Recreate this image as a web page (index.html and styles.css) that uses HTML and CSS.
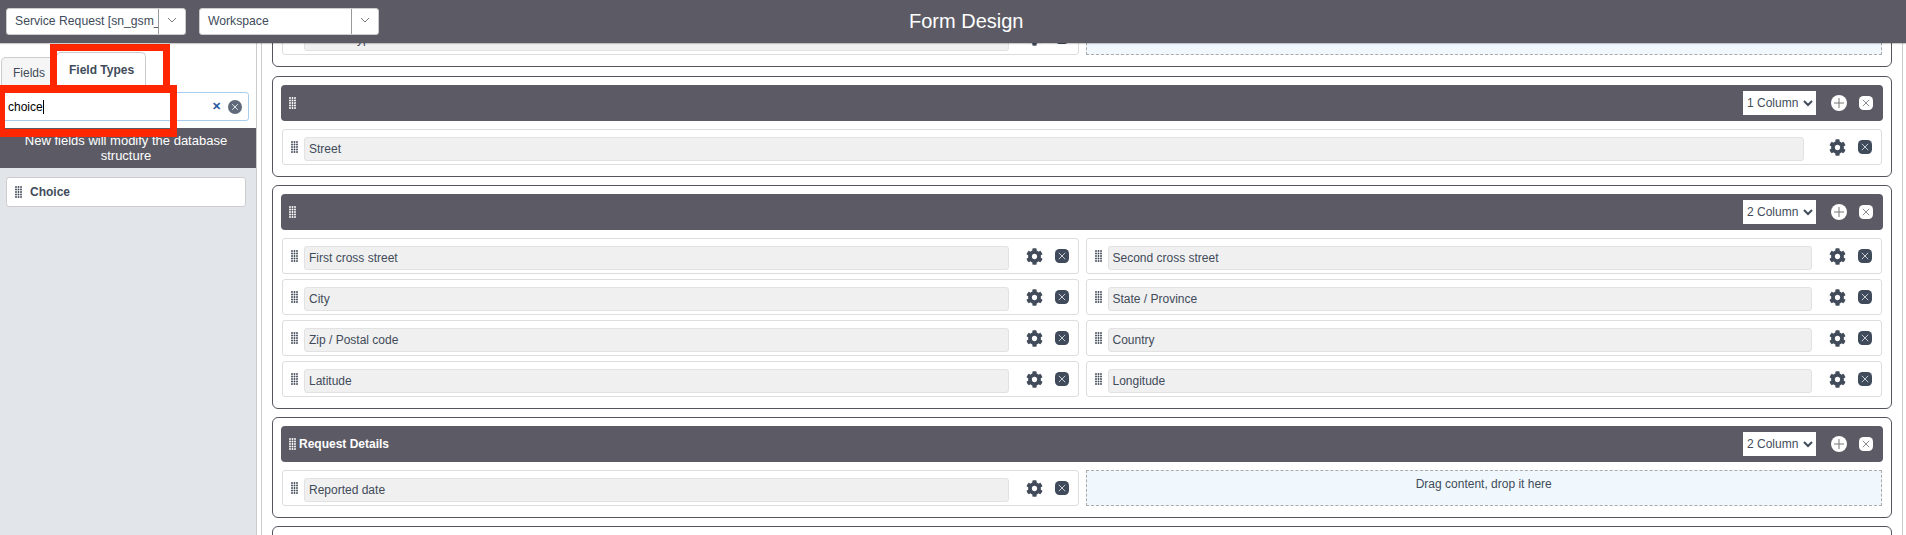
FILE: index.html
```html
<!DOCTYPE html>
<html lang="en">
  <head>
    <meta charset="UTF-8" />
    <title>Form Design</title>
    <link rel="stylesheet" href="styles.css">
  </head>
  <body>
    <svg class="defs" width="0" height="0">
      <symbol id="grip" viewBox="0 0 7 12">
        <g fill="currentColor">
          <circle cx="1" cy="1" r="0.95"/><circle cx="3.500" cy="1" r="0.95"/><circle cx="6" cy="1" r="0.95"/>
          <circle cx="1" cy="3.500" r="0.95"/><circle cx="3.500" cy="3.500" r="0.95"/><circle cx="6" cy="3.500" r="0.95"/>
          <circle cx="1" cy="6" r="0.95"/><circle cx="3.500" cy="6" r="0.95"/><circle cx="6" cy="6" r="0.95"/>
          <circle cx="1" cy="8.500" r="0.95"/><circle cx="3.500" cy="8.500" r="0.95"/><circle cx="6" cy="8.500" r="0.95"/>
          <circle cx="1" cy="11" r="0.95"/><circle cx="3.500" cy="11" r="0.95"/><circle cx="6" cy="11" r="0.95"/>
        </g>
      </symbol>
      <symbol id="gear" viewBox="0 0 512 512">
        <path fill="currentColor" d="M487.4 315.7l-42.6-24.6c4.3-23.2 4.3-47 0-70.2l42.6-24.6c4.9-2.8 7.1-8.6 5.5-14-11.1-35.6-30-67.8-54.7-94.6-3.8-4.1-10-5.1-14.8-2.3L380.8 110c-17.9-15.4-38.5-27.3-60.8-35.1V25.8c0-5.6-3.9-10.5-9.4-11.7-36.7-8.2-74.3-7.8-109.2 0-5.5 1.2-9.4 6.1-9.4 11.7V75c-22.2 7.9-42.8 19.8-60.8 35.1L88.7 85.5c-4.9-2.8-11-1.9-14.8 2.3-24.7 26.7-43.6 58.9-54.7 94.6-1.7 5.4.6 11.2 5.5 14L67.3 221c-4.3 23.2-4.3 47 0 70.2l-42.6 24.6c-4.9 2.8-7.1 8.6-5.5 14 11.1 35.6 30 67.8 54.7 94.6 3.8 4.1 10 5.1 14.8 2.3l42.6-24.6c17.9 15.4 38.5 27.3 60.8 35.1v49.2c0 5.6 3.9 10.5 9.4 11.7 36.7 8.2 74.3 7.8 109.2 0 5.5-1.2 9.4-6.1 9.4-11.7v-49.2c22.2-7.9 42.8-19.8 60.8-35.1l42.6 24.6c4.9 2.8 11 1.9 14.8-2.3 24.7-26.7 43.6-58.9 54.7-94.6 1.5-5.5-.7-11.3-5.6-14.1zM256 336c-44.1 0-80-35.9-80-80s35.9-80 80-80 80 35.9 80 80-35.9 80-80 80z"/>
      </symbol>
      <symbol id="close-box" viewBox="0 0 14 14">
        <rect width="14" height="14" rx="4.500" fill="#3f4a5a"/>
        <path d="M3.800 3.800l6.400 6.400M10.200 3.800l-6.400 6.400" stroke="#c9ced6" stroke-width="1" fill="none"/>
      </symbol>
      <symbol id="close-box-light" viewBox="0 0 14 14">
        <rect width="14" height="14" rx="4.500" fill="#fff"/>
        <path d="M3.800 3.800l6.400 6.400M10.200 3.800l-6.400 6.400" stroke="#8a8a92" stroke-width="1" fill="none"/>
      </symbol>
      <symbol id="plus-circle" viewBox="0 0 16 16">
        <circle cx="8" cy="8" r="8" fill="#fff"/>
        <path d="M8 3v10M3 8h10" stroke="#777" stroke-width="1" fill="none"/>
      </symbol>
      <symbol id="chevron" viewBox="0 0 10 6">
        <path d="M1 1l4 4 4-4" stroke="#777" stroke-width="1" fill="none"/>
      </symbol>
    </svg>

    <header class="topbar">
      <div class="picker">
        <span class="picker-text">Service Request [sn_gsm_</span>
        <span class="picker-arrow"><svg width="10" height="6"><use href="#chevron"/></svg></span>
      </div>
      <div class="picker">
        <span class="picker-text">Workspace</span>
        <span class="picker-arrow"><svg width="10" height="6"><use href="#chevron"/></svg></span>
      </div>
      <h1 class="title">Form Design</h1>
    </header>

    <div class="layout">
      <aside class="sidebar">
        <div class="tabs">
          <div class="tab">Fields</div>
          <div class="tab tab-active">Field Types</div>
        </div>
        <div class="search">
          <span class="search-text"><span class="caret">choice</span></span>
          <span class="search-clear">&#10005;</span>
          <svg class="search-reset" width="14" height="14" viewBox="0 0 14 14">
            <circle cx="7" cy="7" r="7" fill="#5f6b7a"/>
            <path d="M4.2 4.2l5.6 5.6M9.800 4.200l-5.600 5.600" stroke="#e4e7ea" stroke-width="1" fill="none"/>
          </svg>
        </div>
        <div class="notice">New fields will modify the database structure</div>
        <div class="type-list">
          <div class="type-item">
            <svg class="grip" width="7" height="12"><use href="#grip"/></svg>
            <span>Choice</span>
          </div>
        </div>
        <div class="callout callout-tab"></div>
        <div class="callout callout-search"></div>
      </aside>

      <main class="canvas">
        <section class="block block-scrolled">
          <div class="block-head">
            <svg class="grip" width="7" height="12"><use href="#grip"/></svg>
          </div>
          <div class="cols cols-2">
            <div class="field">
              <svg class="grip" width="7" height="12"><use href="#grip"/></svg>
              <div class="field-name">Contact type</div>
              <svg class="gear" width="17" height="17"><use href="#gear"/></svg>
              <svg class="remove" width="14" height="14"><use href="#close-box"/></svg>
            </div>
            <div class="dropzone">Drag content, drop it here</div>
          </div>
        </section>

        <section class="block">
          <div class="block-head">
            <svg class="grip" width="7" height="12"><use href="#grip"/></svg>
            <span class="block-title"></span>
            <select class="col-select"><option>1 Column</option></select>
            <svg class="head-add" width="16" height="16"><use href="#plus-circle"/></svg>
            <svg class="head-remove" width="14" height="14"><use href="#close-box-light"/></svg>
          </div>
          <div class="cols cols-1">
            <div class="field">
              <svg class="grip" width="7" height="12"><use href="#grip"/></svg>
              <div class="field-name">Street</div>
              <svg class="gear" width="17" height="17"><use href="#gear"/></svg>
              <svg class="remove" width="14" height="14"><use href="#close-box"/></svg>
            </div>
          </div>
        </section>

        <section class="block block-tall">
          <div class="block-head">
            <svg class="grip" width="7" height="12"><use href="#grip"/></svg>
            <span class="block-title"></span>
            <select class="col-select"><option>2 Column</option></select>
            <svg class="head-add" width="16" height="16"><use href="#plus-circle"/></svg>
            <svg class="head-remove" width="14" height="14"><use href="#close-box-light"/></svg>
          </div>
          <div class="cols cols-2">
            <div class="field">
              <svg class="grip" width="7" height="12"><use href="#grip"/></svg>
              <div class="field-name">First cross street</div>
              <svg class="gear" width="17" height="17"><use href="#gear"/></svg>
              <svg class="remove" width="14" height="14"><use href="#close-box"/></svg>
            </div>
            <div class="field">
              <svg class="grip" width="7" height="12"><use href="#grip"/></svg>
              <div class="field-name">Second cross street</div>
              <svg class="gear" width="17" height="17"><use href="#gear"/></svg>
              <svg class="remove" width="14" height="14"><use href="#close-box"/></svg>
            </div>
            <div class="field">
              <svg class="grip" width="7" height="12"><use href="#grip"/></svg>
              <div class="field-name">City</div>
              <svg class="gear" width="17" height="17"><use href="#gear"/></svg>
              <svg class="remove" width="14" height="14"><use href="#close-box"/></svg>
            </div>
            <div class="field">
              <svg class="grip" width="7" height="12"><use href="#grip"/></svg>
              <div class="field-name">State / Province</div>
              <svg class="gear" width="17" height="17"><use href="#gear"/></svg>
              <svg class="remove" width="14" height="14"><use href="#close-box"/></svg>
            </div>
            <div class="field">
              <svg class="grip" width="7" height="12"><use href="#grip"/></svg>
              <div class="field-name">Zip / Postal code</div>
              <svg class="gear" width="17" height="17"><use href="#gear"/></svg>
              <svg class="remove" width="14" height="14"><use href="#close-box"/></svg>
            </div>
            <div class="field">
              <svg class="grip" width="7" height="12"><use href="#grip"/></svg>
              <div class="field-name">Country</div>
              <svg class="gear" width="17" height="17"><use href="#gear"/></svg>
              <svg class="remove" width="14" height="14"><use href="#close-box"/></svg>
            </div>
            <div class="field">
              <svg class="grip" width="7" height="12"><use href="#grip"/></svg>
              <div class="field-name">Latitude</div>
              <svg class="gear" width="17" height="17"><use href="#gear"/></svg>
              <svg class="remove" width="14" height="14"><use href="#close-box"/></svg>
            </div>
            <div class="field">
              <svg class="grip" width="7" height="12"><use href="#grip"/></svg>
              <div class="field-name">Longitude</div>
              <svg class="gear" width="17" height="17"><use href="#gear"/></svg>
              <svg class="remove" width="14" height="14"><use href="#close-box"/></svg>
            </div>
          </div>
        </section>

        <section class="block">
          <div class="block-head">
            <svg class="grip" width="7" height="12"><use href="#grip"/></svg>
            <span class="block-title">Request Details</span>
            <select class="col-select"><option>2 Column</option></select>
            <svg class="head-add" width="16" height="16"><use href="#plus-circle"/></svg>
            <svg class="head-remove" width="14" height="14"><use href="#close-box-light"/></svg>
          </div>
          <div class="cols cols-2">
            <div class="field">
              <svg class="grip" width="7" height="12"><use href="#grip"/></svg>
              <div class="field-name">Reported date</div>
              <svg class="gear" width="17" height="17"><use href="#gear"/></svg>
              <svg class="remove" width="14" height="14"><use href="#close-box"/></svg>
            </div>
            <div class="dropzone">Drag content, drop it here</div>
          </div>
        </section>

        <section class="block"></section>
      </main>
    </div>
  </body>
</html>
```

FILE: styles.css
```css
html,
body {
  height: 100%;
}
body {
  margin: 0;
  overflow: hidden;
  font-family: "Liberation Sans", Arial, sans-serif;
  font-size: 12px;
  color: #414b5a;
  background-color: #fff;
}
.defs {
  position: absolute;
}

/* top bar */
.topbar {
  position: relative;
  z-index: 5;
  display: flex;
  align-items: center;
  height: 43px;
  padding: 0 6px;
  box-sizing: border-box;
  background-color: #5c5b65;
  box-shadow: 0 1px 1px rgba(0,0,0,0.2);
}
.picker {
  display: flex;
  width: 180px;
  height: 27px;
  margin-right: 13px;
  box-sizing: border-box;
  background-color: #fff;
  border: 1px solid #ccc;
  border-radius: 3px;
}
.picker-text {
  flex: 1;
  overflow: hidden;
  padding-left: 8px;
  line-height: 25px;
  font-size: 12.2px;
  white-space: nowrap;
}
.picker-arrow {
  display: flex;
  align-items: center;
  justify-content: center;
  width: 27px;
  padding-bottom: 3px;
  box-sizing: border-box;
  border-left: 1px solid #999;
}
.title {
  margin: 0 0 0 517px;
  font-size: 20px;
  font-weight: normal;
  color: #fff;
}

.layout {
  display: flex;
  height: 492px;
}

/* left panel */
.sidebar {
  position: relative;
  display: flex;
  flex-direction: column;
  flex: none;
  width: 257px;
  box-sizing: border-box;
  border-right: 1px solid #ccc;
}
.tabs {
  display: flex;
  align-items: flex-end;
  height: 42px;
  padding-left: 1px;
}
.tab {
  padding: 0 11px;
  height: 28px;
  line-height: 30px;
  white-space: nowrap;
  background-color: #f5f5f5;
  border: 1px solid #ccc;
  border-bottom: none;
  border-radius: 5px 5px 0 0;
  box-sizing: border-box;
  width: 55px;
}
.tab-active {
  width: 90px;
  height: 33px;
  padding-left: 12px;
  line-height: 35px;
  font-weight: bold;
  background-color: #fff;
}
.search {
  display: flex;
  align-items: center;
  height: 29px;
  margin: 7px 7px 0 2px;
  padding: 0 6px 0 5px;
  box-sizing: border-box;
  background-color: #fff;
  border: 1px solid #a9cdec;
  border-radius: 3px;
}
.search-text {
  flex: 1;
  font-size: 12px;
  color: #000;
}
.caret {
  border-right: 1px solid #000;
}
.search-clear {
  margin-right: 7px;
  font-size: 11px;
  font-weight: bold;
  color: #2a5a9e;
}
.notice {
  margin-top: 7px;
  padding: 5px 24px 5px 20px;
  font-size: 13px;
  line-height: 15px;
  text-align: center;
  color: #fff;
  background-color: #5c5b65;
}
.type-list {
  flex: 1;
  padding: 9px 10px 0 6px;
  background-color: #e2e5e9;
}
.type-item {
  display: flex;
  align-items: center;
  height: 30px;
  padding-left: 8px;
  box-sizing: border-box;
  font-weight: bold;
  background-color: #fff;
  border: 1px solid #ccc;
  border-radius: 3px;
}
.type-item span {
  margin-left: 8px;
}
.callout {
  position: absolute;
  box-sizing: border-box;
  border: 7px solid #ff2600;
}
.callout-tab {
  left: 50px;
  top: 1px;
  width: 120px;
  height: 49px;
}
.callout-search {
  left: -2px;
  top: 42px;
  width: 179px;
  height: 52px;
  border-width: 8px 7px;
}

/* form canvas */
.canvas {
  flex: 1;
  min-width: 0;
  margin: 0 3px 0 4px;
  padding: 0 10px;
  overflow: hidden;
  border-left: 1px solid #ccc;
  border-right: 1px solid #ccc;
}
.block {
  height: 101px;
  margin-bottom: 8px;
  padding: 8px 8px 10px;
  box-sizing: border-box;
  border: 1px solid #55555f;
  border-radius: 6px;
}
.block-scrolled {
  margin-top: -77px;
  margin-bottom: 9px;
}
.block-tall {
  height: 224px;
}
.block-head {
  display: flex;
  align-items: center;
  height: 36px;
  padding: 0 10px 0 8px;
  box-sizing: border-box;
  color: #fff;
  background-color: #5c5b65;
  border-radius: 4px;
}
.block-title {
  flex: 1;
  margin-left: 3px;
  font-weight: bold;
}
.col-select {
  width: 73px;
  height: 24px;
  padding: 0;
  font-family: inherit;
  font-size: 12px;
  color: #414b5a;
  background-color: #fff;
  border: none;
  border-radius: 0;
}
.head-add {
  margin-left: 15px;
}
.head-remove {
  margin-left: 12px;
}
.cols {
  display: grid;
  column-gap: 7px;
  row-gap: 5px;
  margin: 8px 1px 0;
}
.cols-1 {
  grid-template-columns: 1fr;
}
.cols-2 {
  grid-template-columns: 1fr 1fr;
}
.field {
  display: flex;
  align-items: center;
  height: 36px;
  padding-left: 8px;
  box-sizing: border-box;
  background-color: #fff;
  border: 1px solid #ddd;
  border-radius: 3px;
}
.field .grip {
  align-self: flex-start;
  margin-top: 11px;
  flex: none;
}
.field-name {
  flex: 1;
  min-width: 0;
  height: 24px;
  margin: 4px 0 0 6px;
  padding-left: 4px;
  line-height: 23px;
  box-sizing: border-box;
  background-color: #f0f0f0;
  border: 1px solid #e2e2e2;
  border-radius: 3px;
}
.cols-1 .field-name {
  margin-right: 8px;
}
.gear {
  flex: none;
  margin-left: 17px;
  color: #414b5a;
}
.remove {
  flex: none;
  margin: 0 9px 0 12px;
}
.dropzone {
  height: 36px;
  padding-top: 6px;
  box-sizing: border-box;
  text-align: center;
  background-color: #f0f8fd;
  border: 1px dashed #aaa;
}
```
